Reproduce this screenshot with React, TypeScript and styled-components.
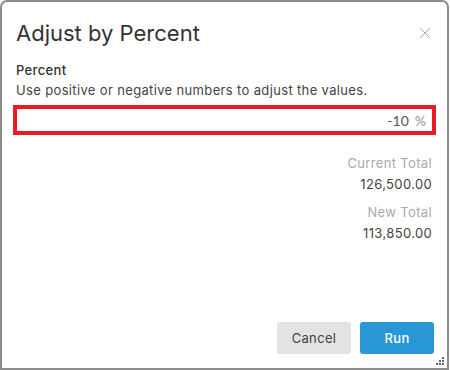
import styled, { createGlobalStyle } from 'styled-components';

const GlobalStyle = createGlobalStyle`
  html, body {
    margin: 0;
    padding: 0;
    background: #fff;
  }
  * {
    box-sizing: border-box;
  }
`;

const Dialog = styled.div`
  width: 449px;
  height: 370px;
  display: flex;
  flex-direction: column;
  background: #fff;
  border: 2px solid #8c8c8c;
  border-top-left-radius: 7px;
  border-top-right-radius: 7px;
  font-family: Inter, "Noto Sans", sans-serif;
  letter-spacing: 0.35px;
  color: #333;
  position: relative;
`;

const Header = styled.div`
  display: flex;
  align-items: center;
  justify-content: space-between;
  padding: 4px 16px 0 14px;
  height: 58px;
`;

const Title = styled.h1`
  margin: 0;
  font-size: 22px;
  font-weight: 400;
  letter-spacing: 0;
  color: #333;
`;

const CloseButton = styled.button`
  border: none;
  background: none;
  padding: 0;
  width: 12px;
  height: 12px;
  display: flex;
  cursor: pointer;
`;

const Body = styled.div`
  display: flex;
  flex-direction: column;
  padding: 0 11px 0 11px;
`;

const Label = styled.div`
  font-size: 13px;
  font-weight: 500;
  color: #333;
  padding-left: 3px;
  line-height: 20px;
`;

const Hint = styled.div`
  font-size: 13px;
  color: #444;
  padding-left: 3px;
  line-height: 20px;
  margin-bottom: 5px;
`;

const InputBox = styled.div`
  display: flex;
  align-items: center;
  justify-content: flex-end;
  gap: 6px;
  height: 30px;
  border: 4px solid #e81c24;
  padding: 0 6px;
  font-family: Lato, sans-serif;
  letter-spacing: 0;
  font-size: 14px;
`;

const Value = styled.span`
  color: #555;
`;

const Unit = styled.span`
  color: #999;
`;

const Totals = styled.div`
  display: flex;
  flex-direction: column;
  align-items: flex-end;
  padding: 18px 4px 0 0;
  gap: 8px;
`;

const Stat = styled.div`
  display: flex;
  flex-direction: column;
  align-items: flex-end;
  gap: 1px;
`;

const StatLabel = styled.span`
  font-size: 13px;
  color: #aaa;
  line-height: 20px;
`;

const StatValue = styled.span`
  font-size: 13px;
  color: #444;
  line-height: 20px;
`;

const Footer = styled.div`
  margin-top: auto;
  display: flex;
  justify-content: flex-end;
  gap: 9px;
  padding: 0 13px 14px 0;
`;

const Button = styled.button<{ $primary?: boolean }>`
  width: 74px;
  height: 32px;
  border: none;
  border-radius: 3px;
  font-family: Inter, "Noto Sans", sans-serif;
  letter-spacing: 0.35px;
  font-size: 13px;
  font-weight: ${(p) => (p.$primary ? 500 : 400)};
  background: ${(p) => (p.$primary ? '#2996d6' : '#e3e3e3')};
  color: ${(p) => (p.$primary ? '#fff' : '#444')};
  cursor: pointer;
`;

const Grip = styled.svg`
  position: absolute;
  right: 2px;
  bottom: 2px;
`;

const App = () => {
  return (
    <>
      <GlobalStyle />
      <Dialog>
        <Header>
          <Title>Adjust by Percent</Title>
          <CloseButton aria-label="Close">
            <svg width="12" height="12" viewBox="0 0 12 12">
              <path d="M1 1L11 11M11 1L1 11" stroke="#aaa" strokeWidth="1" />
            </svg>
          </CloseButton>
        </Header>
        <Body>
          <Label>Percent</Label>
          <Hint>Use positive or negative numbers to adjust the values.</Hint>
          <InputBox>
            <Value>-10</Value>
            <Unit>%</Unit>
          </InputBox>
          <Totals>
            <Stat>
              <StatLabel>Current Total</StatLabel>
              <StatValue>126,500.00</StatValue>
            </Stat>
            <Stat>
              <StatLabel>New Total</StatLabel>
              <StatValue>113,850.00</StatValue>
            </Stat>
          </Totals>
        </Body>
        <Footer>
          <Button>Cancel</Button>
          <Button $primary>Run</Button>
        </Footer>
        <Grip width="9" height="9" viewBox="0 0 9 9">
          <rect x="6" y="0" width="2" height="2" fill="#666" />
          <rect x="3" y="3" width="2" height="2" fill="#666" />
          <rect x="6" y="3" width="2" height="2" fill="#666" />
          <rect x="0" y="6" width="2" height="2" fill="#666" />
          <rect x="3" y="6" width="2" height="2" fill="#666" />
          <rect x="6" y="6" width="2" height="2" fill="#666" />
        </Grip>
      </Dialog>
    </>
  );
};

export default App;
